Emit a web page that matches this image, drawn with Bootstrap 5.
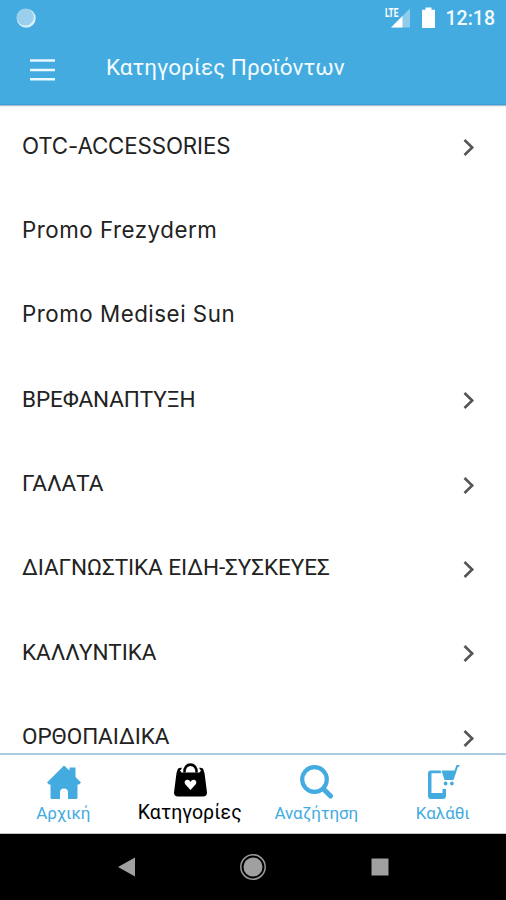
<!DOCTYPE html>
<html lang="el">
<head>
<meta charset="utf-8">
<meta name="viewport" content="width=device-width, initial-scale=1">
<title>Κατηγορίες Προϊόντων</title>
<link href="https://cdn.jsdelivr.net/npm/bootstrap@5.3.0/dist/css/bootstrap.min.css" rel="stylesheet">
<style>
body{font-family:Roboto,"Noto Sans",sans-serif;height:900px;color:#111}
svg{display:block;flex:none}
.topbar{background:#44abe1;height:105px;border-bottom:1px solid #3c9fd6;box-shadow:0 1px 1px #a9bccd;z-index:1}
.statusbar{height:36px;padding:0 11px 0 16px}
.battery,.clock{margin-left:11px}
.clock{font-size:19.5px;font-weight:500;line-height:36px;padding-top:1px;color:#f3fbff}
.titlebar{height:66px;padding-left:30px}
.screen-title{font-size:22.5px;letter-spacing:0;line-height:28px;margin:-5px 0 0 51px;color:#f3fbff}
.rows{height:648px}
.category{height:84.35px;flex:none;padding:0 31px 0 22px}
.category span{font-size:22.5px;line-height:30px;letter-spacing:-.08px;white-space:nowrap;padding-bottom:3px;color:#222}
.category .latin{font-family:Inter,Roboto,sans-serif;font-size:22.3px;letter-spacing:.53px}
.category .caps{letter-spacing:-.12px}
.tabs{height:81px;border-top:2px solid #a9cbe2;border-bottom:1px solid #c4c4c4}
.tab{color:#44abe1;width:126.5px;font-size:17px;line-height:22px;padding-top:8px;letter-spacing:-.1px}
.tab span{margin-top:-1px}
.tab.active{color:#000;font-size:19.5px;letter-spacing:.05px}
.keys{height:66px;background:#000;gap:98.5px}
</style>
<script src="https://cdn.jsdelivr.net/npm/bootstrap@5.3.0/dist/js/bootstrap.bundle.min.js"></script>
</head>
<body class="d-flex flex-column overflow-hidden bg-white">
<header class="topbar flex-shrink-0">
  <div class="statusbar d-flex align-items-center">
    <svg width="20" height="20" viewBox="0 0 20 20"><circle cx="10.2" cy="10.2" r="9.5" fill="#d9effa"/><circle cx="9.2" cy="9" r="8.6" fill="#9acfed"/></svg>
    <svg class="ms-auto" width="28" height="30" viewBox="-2 -4 28 30"><path d="M25 1.500V20.500H6z" fill="#8fcbed"/><path d="M17.500 9V20.500H6z" fill="#fff"/><text x="0" y="9.500" font-family="Roboto" font-size="12.500" font-weight="700" textLength="13.500" lengthAdjust="spacingAndGlyphs" fill="#fff">LTE</text></svg>
    <svg class="battery" width="13" height="22" viewBox="0 0 13 22"><path d="M3.500 0.500h6v2.200H13V21H0V2.700h3.500z" fill="#fff"/></svg>
    <span class="clock">12:18</span>
  </div>
  <div class="titlebar d-flex align-items-center">
    <svg width="25" height="23" viewBox="0 0 25 23"><path d="M0 2.500h25M0 12h25M0 21.300h25" stroke="#eaf8ff" stroke-width="2.500"/></svg>
    <h1 class="screen-title fw-normal">Κατηγορίες Προϊόντων</h1>
  </div>
</header>
<main class="rows d-flex flex-column overflow-hidden flex-shrink-0">
  <div class="category d-flex align-items-center justify-content-between"><span class="latin caps">OTC-ACCESSORIES</span><svg width="12" height="18" viewBox="0 0 12 18"><path d="M1.500 2L9.200 9.500 1.500 17" fill="none" stroke="#555" stroke-width="2.600"/></svg></div>
  <div class="category d-flex align-items-center"><span class="latin">Promo Frezyderm</span></div>
  <div class="category d-flex align-items-center"><span class="latin">Promo Medisei Sun</span></div>
  <div class="category d-flex align-items-center justify-content-between"><span>ΒΡΕΦΑΝΑΠΤΥΞΗ</span><svg width="12" height="18" viewBox="0 0 12 18"><path d="M1.500 2L9.200 9.500 1.500 17" fill="none" stroke="#555" stroke-width="2.600"/></svg></div>
  <div class="category d-flex align-items-center justify-content-between"><span>ΓΑΛΑΤΑ</span><svg width="12" height="18" viewBox="0 0 12 18"><path d="M1.500 2L9.200 9.500 1.500 17" fill="none" stroke="#555" stroke-width="2.600"/></svg></div>
  <div class="category d-flex align-items-center justify-content-between"><span>ΔΙΑΓΝΩΣΤΙΚΑ ΕΙΔΗ-ΣΥΣΚΕΥΕΣ</span><svg width="12" height="18" viewBox="0 0 12 18"><path d="M1.500 2L9.200 9.500 1.500 17" fill="none" stroke="#555" stroke-width="2.600"/></svg></div>
  <div class="category d-flex align-items-center justify-content-between"><span>ΚΑΛΛΥΝΤΙΚΑ</span><svg width="12" height="18" viewBox="0 0 12 18"><path d="M1.500 2L9.200 9.500 1.500 17" fill="none" stroke="#555" stroke-width="2.600"/></svg></div>
  <div class="category d-flex align-items-center justify-content-between"><span>ΟΡΘΟΠΑΙΔΙΚΑ</span><svg width="12" height="18" viewBox="0 0 12 18"><path d="M1.500 2L9.200 9.500 1.500 17" fill="none" stroke="#555" stroke-width="2.600"/></svg></div>
</main>
<nav class="tabs d-flex flex-shrink-0 bg-white">
  <div class="tab d-flex flex-column align-items-center">
    <svg width="36" height="40" viewBox="-1 0 36 40"><path d="M18 2.500L23.500 7.500V4.500h6V14L35 19.500 33 21.500H31.500V34.500q0 1.500-1.500 1.500H22V29.500a4 4 0 0 0-8 0V36H6q-1.500 0-1.500-1.500V21.500H3L1 19.500z" fill="currentColor"/></svg>
    <span>Αρχική</span>
  </div>
  <div class="tab active d-flex flex-column align-items-center">
    <svg width="36" height="40" viewBox="0 0 36 40"><path d="M12.500 9.500C11.500 -1 25.500 -1 24.500 9.500" fill="none" stroke="currentColor" stroke-width="2.600"/><path d="M6 5.500L9.500 4.500V6L8 7.500 9.500 9.500H27.500L29 7.500 27.500 6V4.500L31 5.500 32.500 10 35 29.500q0 4-4 4H6q-4 0-4-4L4.500 10z" fill="currentColor"/><path d="M18.500 27L13.500 21.500c-3-4 3-7 5-2.500 2-4.500 8-1.500 5 2.500z" fill="#fff"/></svg>
    <span>Κατηγορίες</span>
  </div>
  <div class="tab d-flex flex-column align-items-center">
    <svg width="36" height="40" viewBox="-0.500 0 36 40"><circle cx="16" cy="16.500" r="12.300" fill="none" stroke="currentColor" stroke-width="4.200"/><path d="M25 26L32 33" stroke="currentColor" stroke-width="5" stroke-linecap="round"/></svg>
    <span>Αναζήτηση</span>
  </div>
  <div class="tab d-flex flex-column align-items-center">
    <svg width="36" height="40" viewBox="0 0 36 40"><path d="M6 7.500h9.500L16.500 10.200H6.500V30H17.500V26h3.500V32.500q0 3.500-3.500 3.500H6q-3 0-3-3V10.500q0-3 3-3z" fill="currentColor"/><path d="M16.500 7.500H29.500L31.500 2H34.500V3.800H33L28.500 17H19.500zM18.700 20.500a1.900 1.900 0 1 0 3.800 0 1.900 1.900 0 1 0-3.800 0M25 20.500a1.900 1.900 0 1 0 3.800 0 1.900 1.900 0 1 0-3.800 0" fill="currentColor"/></svg>
    <span>Καλάθι</span>
  </div>
</nav>
<footer class="keys flex-shrink-0 d-flex justify-content-center align-items-center">
  <svg width="28" height="28" viewBox="0 0 28 28"><path d="M22 4.500V23.500L5 14z" fill="#a0a0a0"/></svg>
  <svg width="28" height="28" viewBox="0 0 28 28"><circle cx="14" cy="14" r="12.200" fill="none" stroke="#999" stroke-width="1.500"/><circle cx="14" cy="14" r="9.500" fill="#a0a0a0"/></svg>
  <svg width="28" height="28" viewBox="0 0 28 28"><path d="M5.500 5.500H22.500V22.500H5.500z" fill="#a0a0a0"/></svg>
</footer>
</body>
</html>
